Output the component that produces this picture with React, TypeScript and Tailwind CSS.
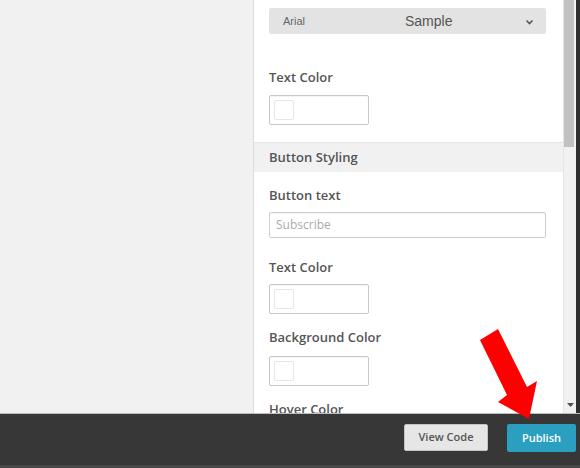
import React from 'react'

const font = { fontFamily: '"Open Sans", "Liberation Sans", sans-serif' }

function Label({ text, className = '' }: { text: string; className?: string }) {
  return (
    <div className={`text-[13px] leading-[17px] font-semibold text-[#555] ${className}`}>{text}</div>
  )
}

function ColorBox({ className = '' }: { className?: string }) {
  return (
    <div className={`w-[100px] h-[30px] border border-[#c8c8c8] rounded-[2px] bg-white p-[4px] shadow-[inset_0_1px_1px_rgba(0,0,0,0.05)] ${className}`}>
      <div className="w-[20px] h-[20px] border border-[#e6e6e6] rounded-[2px] bg-white" />
    </div>
  )
}

export default function App() {
  return (
    <div className="relative w-[580px] h-[468px] overflow-hidden flex flex-col bg-[#f1f1f1]" style={font}>
      <div className="flex flex-1 min-h-0">
        <div className="w-[254px] bg-[#f1f1f1] border-r border-[#dcdcdc]" />
        <div className="flex-1 bg-white overflow-hidden">
          <div className="pl-[15px] pr-[17px] pt-[8px]">
            <div className="h-[26px] bg-[#e3e3e3] rounded-[2px] flex items-center pl-[14px] pr-[12px]">
              <span className="text-[11px] text-[#666] w-[122px]" style={{ fontFamily: '"Liberation Sans", Arial, sans-serif' }}>Arial</span>
              <span className="text-[14px] text-[#555] flex-1" style={{ fontFamily: '"Liberation Sans", Arial, sans-serif' }}>Sample</span>
              <svg width="9" height="6" viewBox="0 0 9 6" className="mt-[2px]">
                <path d="M1.5 1.5 L4.5 4.5 L7.5 1.5" stroke="#555" strokeWidth="1.6" fill="none" />
              </svg>
            </div>
            <Label text="Text Color" className="mt-[35px]" />
            <ColorBox className="mt-[9px]" />
          </div>
          <div className="mt-[17px] border-t border-[#e4e4e4] bg-[#f1f1f1] h-[30px] flex items-center pl-[15px]">
            <span className="text-[13px] font-semibold text-[#555]">Button Styling</span>
          </div>
          <div className="pl-[15px] pr-[17px]">
            <Label text="Button text" className="mt-[15px]" />
            <div className="mt-[8px] h-[26px] border border-[#cfcfcf] rounded-[2px] flex items-center pl-[6px] shadow-[inset_0_1px_1px_rgba(0,0,0,0.05)]">
              <span className="text-[12px] text-[#aaa]">Subscribe</span>
            </div>
            <Label text="Text Color" className="mt-[21px]" />
            <ColorBox className="mt-[8px]" />
            <Label text="Background Color" className="mt-[15px]" />
            <ColorBox className="mt-[10px]" />
            <Label text="Hover Color" className="mt-[15px]" />
          </div>
        </div>
        <div className="w-[13px] bg-[#f1f1f1] border-l border-[#e6e6e6] relative">
          <div className="w-[10px] h-[147px] bg-[#c1c1c1]" />
          <svg width="7" height="4" viewBox="0 0 7 4" className="absolute left-[3px] bottom-[6px]">
            <path d="M0 0 L7 0 L3.5 4 Z" fill="#505050" />
          </svg>
        </div>
        <div className="w-[4px] bg-[#2f2f2f]" />
      </div>
      <div className="h-[55px] bg-[#373737] border-t border-[#bcbcbc] flex flex-col">
        <div className="flex-1 flex items-start justify-end pt-[10px] pr-[4px]">
          <button className="w-[84px] h-[27px] bg-[#e6e6e6] border border-[#c4c4c4] rounded-[2px] text-[11px] font-semibold text-[#555] mr-[19px]">
            View Code
          </button>
          <button className="w-[69px] h-[28px] bg-[#2a9fbf] rounded-[2px] text-[11px] font-semibold text-white">
            Publish
          </button>
        </div>
        <div className="h-[3px] bg-[#474747]" />
      </div>
      <svg className="absolute left-0 top-0 pointer-events-none" width="580" height="468" viewBox="0 0 580 468">
        <polygon points="480,340 498,329 527,387 537,381 529,419 498,402 507,395" fill="#ff0000" />
      </svg>
    </div>
  )
}
